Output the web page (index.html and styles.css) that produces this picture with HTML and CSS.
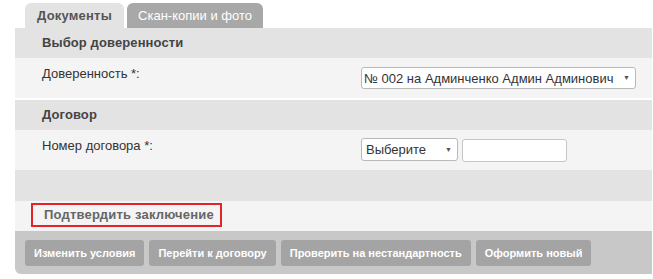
FILE: index.html
```html
<!DOCTYPE html>
<html lang="ru">
<head>
    <meta charset="utf-8">
    <title>Заключение</title>
    <link rel="stylesheet" href="styles.css">
</head>
<body>
    <div class="wrap">
        <div class="tabs">
            <div class="tab tab_active">Документы</div>
            <div class="tab tab_scan">Скан-копии и фото</div>
        </div>

        <div class="panel">
            <div class="block">
                <div class="block_head">Выбор доверенности</div>
                <div class="field">
                    <div class="field_label">Доверенность *:</div>
                    <div class="field_ctrl">
                        <div class="sel sel_wide">
                            <select>
                                <option>№ 002 на Админченко Админ Админович</option>
                            </select>
                            <span class="sel_arrow">▼</span>
                        </div>
                    </div>
                </div>
            </div>

            <div class="block">
                <div class="block_head">Договор</div>
                <div class="field">
                    <div class="field_label">Номер договора *:</div>
                    <div class="field_ctrl">
                        <div class="sel sel_small">
                            <select>
                                <option>Выберите</option>
                            </select>
                            <span class="sel_arrow">▼</span>
                        </div>
                        <input type="text" class="txt">
                    </div>
                </div>
                <div class="block_empty"></div>
                <div class="confirm_row">
                    <div class="confirm">Подтвердить заключение</div>
                </div>
            </div>

            <div class="buttons">
                <button class="btn">Изменить условия</button>
                <button class="btn">Перейти к договору</button>
                <button class="btn">Проверить на нестандартность</button>
                <button class="btn">Оформить новый</button>
            </div>
        </div>
    </div>
</body>
</html>
```

FILE: styles.css
```css
body {
    margin: 0;
    font-family: "Liberation Sans", Arial, sans-serif;
    font-size: 13px;
    color: #333;
    background-color: #fff;
}

.wrap {
    margin: 3px 1px 0 15px;
}

.tabs {
    display: flex;
    gap: 3px;
    padding-left: 10px;
}

.tab {
    flex-shrink: 0;
    box-sizing: border-box;
    height: 25px;
    line-height: 25px;
    text-align: center;
    white-space: nowrap;
    border-radius: 6px 6px 0 0;
    background-color: #a8a8a8;
    color: #fff;
}

.tab_active {
    width: 99px;
    background-color: #e3e3e3;
    color: #555;
    font-weight: bold;
    letter-spacing: 0.2px;
}

.tab_scan {
    width: 136px;
}

.block {
    margin-bottom: 2px;
}

.block_head {
    height: 30px;
    line-height: 30px;
    padding-left: 27px;
    background-color: #e3e3e3;
    color: #444;
    font-weight: bold;
    letter-spacing: 0.1px;
}

.field {
    display: flex;
    height: 40px;
    background-color: #f4f4f4;
    box-sizing: border-box;
    padding-top: 8px;
}

.field_label {
    width: 319px;
    padding-left: 27px;
    line-height: 15px;
}

.field_ctrl {
    display: flex;
    gap: 4px;
}

.sel {
    position: relative;
}

.sel select {
    appearance: none;
    -webkit-appearance: none;
    font-family: "Liberation Sans", Arial, sans-serif;
    font-size: 13px;
    color: #333;
    background-color: #fff;
    border: 1px solid #b9b9b9;
    border-radius: 3px;
    padding: 0 14px 0 2px;
    margin: 0;
    box-sizing: border-box;
}

.sel_wide select {
    width: 275px;
    height: 22px;
    margin-top: 1px;
}

.sel_small select {
    width: 97px;
    height: 23px;
    padding-left: 4px;
}

.sel_arrow {
    position: absolute;
    right: 6px;
    top: 8px;
    font-size: 7px;
    color: #555;
    pointer-events: none;
}

.txt {
    width: 105px;
    height: 23px;
    margin: 1px 0 0 0;
    box-sizing: border-box;
    border: 1px solid #c6c6c6;
    border-radius: 3px;
    background-color: #fff;
}

.block_empty {
    height: 31px;
    background-color: #e3e3e3;
}

.confirm_row {
    height: 30px;
    background-color: #f4f4f4;
    padding: 2px 0 0 16px;
    box-sizing: border-box;
}

.confirm {
    display: inline-block;
    border: 2px solid #e0262b;
    height: 24px;
    box-sizing: border-box;
    line-height: 20px;
    padding: 0 6px 0 11px;
    color: #666;
    font-weight: bold;
    letter-spacing: 0.2px;
}

.buttons {
    margin-top: -2px;
    display: flex;
    gap: 5px;
    height: 43px;
    padding: 9px 0 0 10px;
    box-sizing: border-box;
    background-color: #c8c8c8;
    border-radius: 0 0 0 6px;
}

.btn {
    height: 26px;
    padding: 0 9px;
    border: none;
    border-radius: 3px;
    background-color: #a4a4a4;
    color: #fff;
    font-family: "Liberation Sans", Arial, sans-serif;
    font-size: 11px;
    font-weight: bold;
    cursor: pointer;
}
```
